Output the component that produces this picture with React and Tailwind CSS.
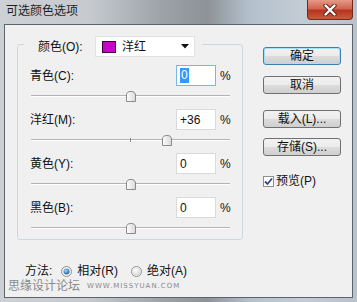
import React from "react";

const FONT = { fontFamily: '"Liberation Sans", "Noto Sans CJK SC", sans-serif' };

const ROWS = [
  { label: "青色(C):", value: "0", pos: 0, focus: true },
  { label: "洋红(M):", value: "+36", pos: 36, tick: true },
  { label: "黄色(Y):", value: "0", pos: 0 },
  { label: "黑色(B):", value: "0", pos: 0 },
];

// slider thumb, tombstone shape
const Thumb = () => (
  <svg width="10" height="11" viewBox="0 0 10 11">
    <defs>
      <linearGradient id="tg" x1="0" y1="0" x2="1" y2="0">
        <stop offset="0" stopColor="#ffffff" />
        <stop offset="1" stopColor="#d8d8d8" />
      </linearGradient>
    </defs>
    <path d="M0.5 10.5 V4 Q0.5 0.5 5 0.5 Q9.5 0.5 9.5 4 V10.5 Z" fill="url(#tg)" stroke="#8a8a8a" />
  </svg>
);

const Slider = ({ pos, tick }) => (
  <div className="relative h-[18px]">
    <div className="absolute left-[1px] top-[9px] w-[199px] h-[1px] bg-[#b4b4b4]" />
    <div className="absolute left-[1px] top-[10px] w-[199px] h-[1px] bg-white" />
    {tick && <div className="absolute left-[100px] top-[8px] w-[1px] h-[4px] bg-[#8a8a8a]" />}
    <div className="absolute top-[5px]" style={{ left: 96 + pos }}>
      <Thumb />
    </div>
  </div>
);

const Row = ({ label, value, pos, focus, tick }) => (
  <div className="flex flex-col">
    <div className="flex items-center h-[21px] text-[12px] text-[#111]">
      <span className="flex-1">{label}</span>
      <div
        className={
          "w-[40px] h-[21px] bg-white border flex items-center pl-[3px] " +
          (focus ? "border-[#7eb4ea]" : "border-[#dadada]")
        }
      >
        {focus ? <span className="bg-[#3399ff] text-white leading-[15px] px-[1px]">{value}</span> : <span>{value}</span>}
      </div>
      <span className="ml-[4px] w-[11px]">%</span>
    </div>
    <Slider pos={pos} tick={tick} />
  </div>
);

const Button = ({ children, primary }) => (
  <div
    className={
      "w-[78px] h-[18px] rounded-[3px] border flex items-center justify-center text-[12px] text-[#111] bg-[linear-gradient(#f2f2f2_0%,#ebebeb_50%,#dddddd_50%,#cfcfcf_100%)] " +
      (primary ? "border-[#3c7fb1] shadow-[inset_0_0_0_1px_#a6e0f8]" : "border-[#707070]")
    }
  >
    {children}
  </div>
);

const Radio = ({ on }) => (
  <svg width="11" height="11" viewBox="0 0 11 11">
    <defs>
      <radialGradient id={on ? "ron" : "roff"} cx="0.4" cy="0.35" r="0.7">
        <stop offset="0" stopColor={on ? "#9fd4ff" : "#ffffff"} />
        <stop offset="1" stopColor={on ? "#1d5f96" : "#d4d4d4"} />
      </radialGradient>
    </defs>
    <circle cx="5.5" cy="5.5" r="5" fill="#f4f4f4" stroke="#8e8f8f" />
    <circle cx="5.5" cy="5.5" r={on ? 3 : 4} fill={`url(#${on ? "ron" : "roff"})`} />
  </svg>
);

export default function App() {
  return (
    <div
      className="w-[357px] h-[302px] flex flex-col overflow-hidden bg-[linear-gradient(90deg,#cdd1d5_0%,#c6cacf_25%,#9ea3a9_45%,#8d9298_58%,#b4c1cd_70%,#c3ccd5_85%,#b9c2cb_100%)]"
      style={FONT}
    >
      {/* title bar */}
      <div className="h-[24px] flex items-start justify-between pl-[6px] pr-[4px]">
        <span className="mt-[4px] text-[12px] leading-[14px] text-[#1e1e1e]">可选颜色选项</span>
        <div className="w-[46px] h-[20px] rounded-b-[4px] border border-t-0 border-[#6e2b20] bg-[linear-gradient(#e59a88_0%,#d0644f_45%,#b8341e_55%,#c85a3c_100%)] flex items-center justify-center">
          <svg width="14" height="12" viewBox="0 0 14 12">
            <path d="M2.5 1.5 L11.5 10.5 M11.5 1.5 L2.5 10.5" stroke="#5a1f18" strokeWidth="4.2" strokeLinecap="round" />
            <path d="M2.5 1.5 L11.5 10.5 M11.5 1.5 L2.5 10.5" stroke="#ffffff" strokeWidth="2.4" strokeLinecap="round" />
          </svg>
        </div>
      </div>

      {/* dialog body */}
      <div className="mx-[4px] h-[274px] border border-[#5c646c] bg-[#f0f0f0] flex flex-col">
        <div className="flex">
          <div className="pl-[12px] pt-[19px]">
            <div className="relative w-[226px] h-[196px] border border-[#cfd7dd] rounded-[3px] pt-[20px] pl-[12px] pr-[11px] flex flex-col gap-[5px]">
              <div className="absolute left-[6px] top-[-9px] bg-[#f0f0f0] flex items-center pl-[14px] pr-[7px] text-[12px] text-[#111]">
                <span className="w-[57px]">颜色(O):</span>
                <div className="w-[100px] h-[21px] bg-white border border-[#e2e2e2] flex items-center pl-[6px] pr-[5px]">
                  <div className="w-[14px] h-[12px] bg-[#c800c8] border border-[#3a003a]" />
                  <span className="ml-[6px] flex-1">洋红</span>
                  <svg width="8" height="5" viewBox="0 0 8 5">
                    <path d="M0 0 H8 L4 4.5 Z" fill="#111" />
                  </svg>
                </div>
              </div>
              {ROWS.map((r) => (
                <Row key={r.label} {...r} />
              ))}
            </div>
          </div>

          <div className="ml-[20px] pt-[22px] flex flex-col">
            <Button primary>确定</Button>
            <div className="mt-[11px]">
              <Button>取消</Button>
            </div>
            <div className="mt-[16px]">
              <Button>载入(L)...</Button>
            </div>
            <div className="mt-[10px]">
              <Button>存储(S)...</Button>
            </div>
            <div className="mt-[16px] flex items-center text-[12px] text-[#111]">
              <div className="w-[11px] h-[11px] border border-[#8e8f8f] bg-white flex items-center justify-center">
                <svg width="9" height="9" viewBox="0 0 9 9">
                  <path d="M1 4.5 L3.5 7 L8 1.5" stroke="#2c4a8c" strokeWidth="1.8" fill="none" />
                </svg>
              </div>
              <span className="ml-[2px]">预览(P)</span>
            </div>
          </div>
        </div>

        <div className="mt-[23px] h-[16px] pl-[20px] flex items-center text-[12px] text-[#111]">
          <span>方法:</span>
          <span className="ml-[9px] flex"><Radio on /></span>
          <span className="ml-[5px]">相对(R)</span>
          <span className="ml-[13px] flex"><Radio /></span>
          <span className="ml-[5px]">绝对(A)</span>
        </div>

        <div className="pl-[3px] h-[14px] flex items-center text-[#8a8a8a]">
          <span className="text-[12px] leading-[14px]">思缘设计论坛</span>
          <span className="ml-[7px] text-[7px] tracking-[1px] leading-[14px]" style={{ fontFamily: '"DejaVu Sans", sans-serif' }}>
            WWW.MISSYUAN.COM
          </span>
        </div>
      </div>
    </div>
  );
}
